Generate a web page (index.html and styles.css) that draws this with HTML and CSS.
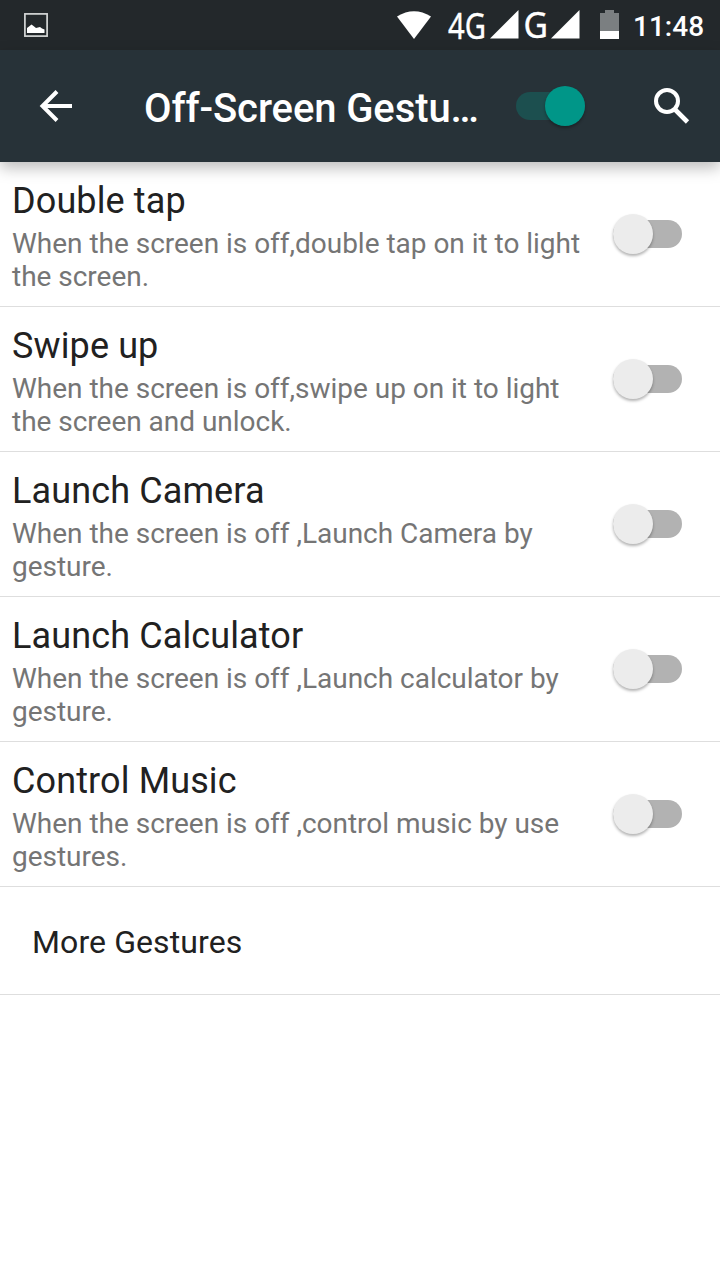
FILE: index.html
```html
<!DOCTYPE html>
<html lang="en">
<head>
    <meta charset="UTF-8">
    <meta name="viewport" content="width=device-width, initial-scale=1.0">
    <title>Off-Screen Gestures</title>
    <link rel="stylesheet" href="styles.css">
</head>
<body>
    <!-- Status bar -->
    <div class="status-bar">
        <svg class="icon-picture" width="24" height="24" viewBox="0 0 24 24">
            <rect x="0.9" y="0.9" width="22.2" height="22.2" fill="none" stroke="#d5d7d7" stroke-width="1.7"/>
            <path d="M3 20V15L5 13.5L7.5 11.5L9.5 13L12 15L14 14.5L16 14L18 15.5L20.5 16.5V20Z" fill="#fff"/>
        </svg>
        <svg class="icon-wifi" width="36" height="29" viewBox="0 0 36 29">
            <path d="M1 6.5Q18 -4 35 6.5L18 29Z" fill="#fff"/>
        </svg>
        <svg class="icon-4g" width="42" height="40" viewBox="0 0 42 40">
            <text x="2" y="28.7" textLength="38" lengthAdjust="spacingAndGlyphs">4G</text>
        </svg>
        <svg class="icon-signal" width="29" height="29" viewBox="0 0 29 29">
            <path d="M0 28.5L28.5 0V28.5Z" fill="#fff"/>
        </svg>
        <svg class="icon-g" width="28" height="40" viewBox="0 0 28 40">
            <text x="1.5" y="27.7" textLength="24.5" lengthAdjust="spacingAndGlyphs">G</text>
        </svg>
        <svg class="icon-signal" width="29" height="29" viewBox="0 0 29 29">
            <path d="M0 28.5L28.5 0V28.5Z" fill="#fff"/>
        </svg>
        <svg class="icon-battery" width="19" height="29" viewBox="0 0 19 29">
            <path d="M0 3H5V0H14V3H19V21H0Z" fill="#7b7f81"/>
            <path d="M0 21H19V29H0Z" fill="#fff"/>
        </svg>
        <span class="clock">11:48</span>
    </div>

    <!-- App bar -->
    <div class="app-bar">
        <svg class="icon-back" width="32" height="32" viewBox="0 0 32 32">
            <path d="M32 16H3M17 1.5L2.5 16L17 30.5" fill="none" stroke="#fff" stroke-width="4"/>
        </svg>
        <h1>Off-Screen Gestu…</h1>
        <div class="switch on"><span class="thumb"></span></div>
        <svg class="icon-search" width="36" height="36" viewBox="0 0 36 36">
            <circle cx="13" cy="13" r="11" fill="none" stroke="#fff" stroke-width="4"/>
            <path d="M21 21.5L33.5 34" fill="none" stroke="#fff" stroke-width="4.6"/>
        </svg>
    </div>

    <!-- Gesture list -->
    <div class="list">
        <div class="item">
            <div class="item-text">
                <h2>Double tap</h2>
                <p>When the screen is off,double tap on it to light the screen.</p>
            </div>
            <div class="switch"><span class="thumb"></span></div>
        </div>
        <div class="item">
            <div class="item-text">
                <h2>Swipe up</h2>
                <p>When the screen is off,swipe up on it to light the screen and unlock.</p>
            </div>
            <div class="switch"><span class="thumb"></span></div>
        </div>
        <div class="item">
            <div class="item-text">
                <h2>Launch Camera</h2>
                <p>When the screen is off ,Launch Camera by gesture.</p>
            </div>
            <div class="switch"><span class="thumb"></span></div>
        </div>
        <div class="item">
            <div class="item-text">
                <h2>Launch Calculator</h2>
                <p>When the screen is off ,Launch calculator by gesture.</p>
            </div>
            <div class="switch"><span class="thumb"></span></div>
        </div>
        <div class="item">
            <div class="item-text">
                <h2>Control Music</h2>
                <p>When the screen is off ,control music by use gestures.</p>
            </div>
            <div class="switch"><span class="thumb"></span></div>
        </div>
        <div class="more">More Gestures</div>
    </div>
</body>
</html>
```
FILE: styles.css
```css
* {
    margin: 0;
    padding: 0;
    box-sizing: border-box;
}

body {
    font-family: Roboto, sans-serif;
    background-color: #fff;
    color: #212121;
    min-height: 100vh;
}

svg {
    display: block;
    flex-shrink: 0;
    overflow: visible;
}

.status-bar {
    display: flex;
    align-items: flex-start;
    height: 50px;
    padding: 10px 15px 0 24px;
    background-color: #23282b;
}

.status-bar text {
    font-family: "Noto Sans", sans-serif;
    font-size: 36px;
    fill: #fff;
    stroke: #fff;
    stroke-width: 0.4px;
}

.icon-picture {
    margin-top: 3px;
}

.icon-wifi {
    margin-left: auto;
    margin-right: 14px;
}

.icon-4g {
    margin-right: 2px;
}

.icon-g {
    margin-left: 3px;
    margin-right: 1px;
}

.icon-battery {
    margin-left: 20px;
}

.clock {
    width: 72px;
    margin-left: 14px;
    font-size: 28px;
    font-weight: 500;
    line-height: 33px;
    color: #fff;
    white-space: nowrap;
}

.app-bar {
    display: flex;
    align-items: center;
    position: relative;
    height: 112px;
    padding: 0 30px 0 40px;
    background-color: #273238;
    box-shadow: 0 6px 14px rgba(0, 0, 0, 0.26);
}

.app-bar h1 {
    width: 344px;
    margin-left: 72px;
    padding-top: 5px;
    font-size: 40px;
    font-weight: 500;
    line-height: 49px;
    letter-spacing: -0.1px;
    color: #fff;
    white-space: nowrap;
}

.app-bar .switch {
    margin-left: 28px;
}

.icon-search {
    margin-left: auto;
}

.switch {
    display: flex;
    align-items: center;
    flex-shrink: 0;
    width: 69px;
    height: 28px;
    border-radius: 14px;
    background-color: #b2b2b2;
}

.thumb {
    width: 40px;
    height: 40px;
    border-radius: 50%;
    background-color: #ececec;
    box-shadow: 0 2px 3px rgba(0, 0, 0, 0.3);
}

.switch.on {
    justify-content: flex-end;
    background-color: #1c4f4f;
}

.switch.on .thumb {
    background-color: #009688;
}

.item {
    display: flex;
    align-items: center;
    justify-content: space-between;
    height: 145px;
    padding: 0 38px 0 12px;
    border-bottom: 1px solid #dedede;
}

.item-text {
    width: 576px;
    padding-top: 4px;
}

.item h2 {
    font-size: 36px;
    font-weight: 400;
    line-height: 43px;
    letter-spacing: 0.12px;
}

.item p {
    padding-top: 4px;
    font-size: 28px;
    line-height: 33px;
    letter-spacing: -0.02px;
    color: #757575;
}

.more {
    height: 108px;
    padding-left: 32px;
    font-size: 32px;
    line-height: 111px;
    letter-spacing: 0.1px;
    border-bottom: 1px solid #dedede;
}
```
